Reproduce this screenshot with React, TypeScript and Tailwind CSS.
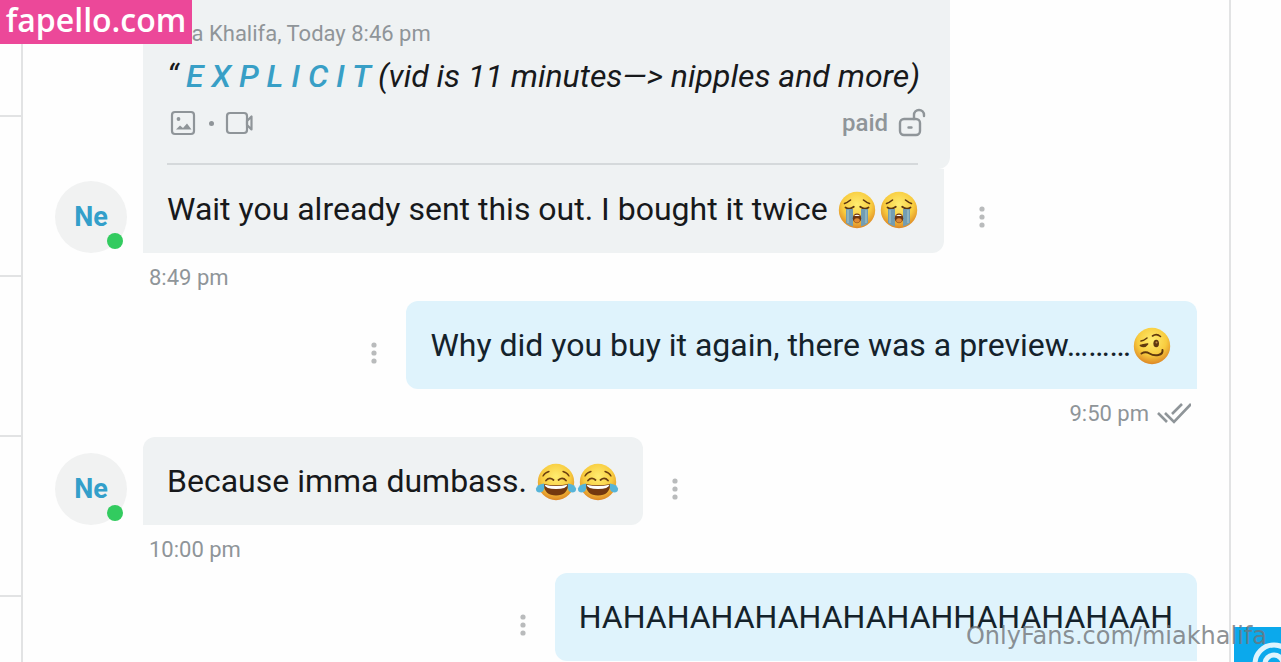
import { ReactNode } from 'react';
import clsx from 'clsx';

function Sob() {
  return (
    <svg viewBox="0 0 38 38" className="inline-block align-middle size-[38px] mx-[2px] -mt-2 -mb-1" role="img" aria-label="Loudly crying">
      <circle cx="19" cy="19" r="18.2" fill="url(#face)" />
      <g fill="none" stroke="#5b3410" strokeLinecap="round">
        <path d="M6.5 12.5Q9.500 11.500 12.500 9M31.500 12.500Q28.500 11.500 25.500 9" strokeWidth="1.6" />
        <path d="M7.500 16.500Q11.500 19 15.800 15.800M30.500 16.500Q26.500 19 22.200 15.800" strokeWidth="1.8" />
      </g>
      <path d="M8 18h7v17.500q-4-.9-7-3.600zM30 18h-7v17.500q4-.9 7-3.600z" fill="#739db2" />
      <path d="M10 19v13M28 19v13" stroke="#96bac6" strokeWidth="1.5" />
      <ellipse cx="19" cy="27.3" rx="4.2" ry="4.9" fill="#6d3511" />
      <path d="M16 25q3-2.500 6 0z" fill="#fff" />
      <ellipse cx="19" cy="29.500" rx="2.8" ry="2.2" fill="#e08a35" />
    </svg>
  );
}

function Joy() {
  return (
    <svg viewBox="0 0 38 38" className="inline-block align-middle size-[38px] mx-[2px] -mt-2 -mb-1 overflow-visible" role="img" aria-label="Tears of joy">
      <circle cx="19" cy="19" r="18.2" fill="url(#face)" />
      <g fill="none" stroke="#6b3e10" strokeLinecap="round">
        <path d="M6 13Q8 9.500 12 8.500M32 13Q30 9.500 26 8.500" strokeWidth="1.3" />
        <path d="M9 17.500Q12.500 13.500 16.500 17M29 17.500Q25.500 13.500 21.500 17" strokeWidth="1.8" />
      </g>
      <path d="M6.500 21Q19 23.500 31.500 21Q30.500 32.500 19 32.500T6.500 21z" fill="#74380f" />
      <path d="M7.500 21.800Q19 24.200 30.500 21.800Q29.500 26 19 26T7.500 21.800z" fill="#fff" />
      <path d="M7 20.500Q8.500 29 3 29.500Q-1.500 29.500-1 25.500Q0 21.500 7 20.500z" fill="#56b4d8" />
      <path d="M31 20.500Q29.500 29 35 29.500Q39.500 29.500 39 25.500Q38 21.500 31 20.500z" fill="#56b4d8" />
    </svg>
  );
}

function Woozy() {
  return (
    <svg viewBox="0 0 38 38" className="inline-block align-middle size-[38px] mx-[2px] -mt-2 -mb-1" role="img" aria-label="Woozy face">
      <circle cx="19" cy="19" r="18.2" fill="url(#face)" />
      <g fill="none" stroke="#60390f" strokeLinecap="round" strokeLinejoin="round">
        <path d="M8 14Q11 13.500 14 11M19.500 9Q23.500 6 27.500 9.500" strokeWidth="1.6" />
        <path d="M7.500 18.500Q11.500 21 14.500 17L9 18" strokeWidth="1.7" />
        <path d="M8.500 26.500Q12.500 24 16.500 26.500T25.500 28Q30 27 29.500 23" strokeWidth="2" />
      </g>
      <ellipse cx="23.200" cy="16.500" rx="2.8" ry="3.8" fill="#60390f" />
      <circle cx="23.500" cy="15.500" r="1" fill="#c08a45" />
    </svg>
  );
}

function Avatar({ initials }: { initials: string }) {
  return (
    <div className="relative flex size-[72px] shrink-0 items-center justify-center rounded-full bg-[#f1f2f2] mr-4">
      <span className="text-[27px] font-bold text-[#339fca]">{initials}</span>
      <span className="absolute right-1 bottom-1 size-4 rounded-full bg-[#32cb5f]" />
    </div>
  );
}

function MenuButton() {
  return (
    <button aria-label="Message options" className="flex h-[72px] w-16 shrink-0 items-center justify-center">
      <svg width="6" height="22" viewBox="0 0 6 22" fill="#b9bbbc">
        <circle cx="3" cy="3" r="2.6" />
        <circle cx="3" cy="11" r="2.6" />
        <circle cx="3" cy="19" r="2.6" />
      </svg>
    </button>
  );
}

function Bubble({ children, own = false }: { children: ReactNode; own?: boolean }) {
  return (
    <div className={clsx(
      'p-6 text-[32px] leading-10 whitespace-nowrap',
      own ? 'bg-[#dff3fc] text-[#14222b] rounded-xl rounded-br-none' : 'bg-[#eff2f3] text-[#17191b] rounded-xl rounded-bl-none',
    )}>
      {children}
    </div>
  );
}

function Time({ children, own = false }: { children: ReactNode; own?: boolean }) {
  return (
    <div className={clsx(
      'flex h-12 items-center gap-2 text-[22px] text-[#8f9599]',
      own ? 'justify-end pr-[6px]' : 'pl-[94px]',
    )}>
      {children}
    </div>
  );
}

function QuotedPost() {
  return (
    <div className="w-fit bg-[#eff2f3] rounded-br-xl px-6 pt-[18px] pb-1 whitespace-nowrap">
      <div className="text-[22px] leading-8 text-[#8f9599]">Mia Khalifa, Today 8:46 pm</div>
      <div className="mt-[6px] pr-[6px] text-[32px] leading-10 italic text-[#17191b]">
        “<a href="#explicit" className="font-medium text-[#389fc6]"> E X P L I C I T </a>(vid is 11 minutes—&gt; nipples and more)
      </div>
      <div className="mt-[11px] flex h-8 items-center text-[#8f9599]">
        <svg width="32" height="32" viewBox="0 0 32 32" fill="none" stroke="currentColor" strokeWidth="2.2">
          <rect x="5" y="5" width="22" height="22" rx="3" />
          <circle cx="11.500" cy="12" r="1.900" fill="currentColor" stroke="none" />
          <path d="M9 22.500l4-4 3 2.500 4-4.500 4.500 6z" fill="currentColor" stroke="none" />
        </svg>
        <span className="mx-[10px] size-[5px] rounded-full bg-current" />
        <svg width="32" height="32" viewBox="0 0 32 32" fill="none" stroke="currentColor" strokeWidth="2.2" strokeLinejoin="round">
          <rect x="3" y="6" width="20" height="20" rx="3" />
          <path d="M23 14l4.500-4.500v13l-4.500-4.500z" />
        </svg>
        <span className="ml-auto mr-2 text-2xl font-medium">paid</span>
        <svg width="30" height="32" viewBox="0 0 30 32" fill="none" stroke="currentColor" strokeWidth="2.4" strokeLinecap="round">
          <rect x="4" y="12" width="20" height="16" rx="4" />
          <path d="M18 12V8a5 5 0 0 1 10 0v1M12.500 20.500h3" />
        </svg>
      </div>
      <div className="mt-6 mr-2 border-t-2 border-[#d5d9db]" />
    </div>
  );
}

function ReadTicks() {
  return (
    <svg width="34" height="22" viewBox="0 0 34 22" fill="none" stroke="#8f9599" strokeWidth="2.6" role="img" aria-label="Read">
      <path d="M1 11l9 9M8 11l9 9L34 2M15 12L25 2" />
    </svg>
  );
}

export default function App() {
  return (
    <div className="relative flex h-screen overflow-hidden bg-[#fefefe] font-[Roboto,sans-serif]">
      <svg width="0" height="0" className="absolute" aria-hidden="true">
        <defs>
          <radialGradient id="face" cx=".5" cy=".35" r=".66">
            <stop offset="0" stopColor="#ffed70" />
            <stop offset=".6" stopColor="#f8cc3f" />
            <stop offset="1" stopColor="#dc8424" />
          </radialGradient>
        </defs>
      </svg>

      {/* Conversation list edge */}
      <aside className="w-[23px] shrink-0 border-r-2 border-[#e2e3e4]">
        <div className="h-[117px] border-b-2 border-[#e2e3e4]" />
        <div className="h-40 border-b-2 border-[#e2e3e4]" />
        <div className="h-40 border-b-2 border-[#e2e3e4]" />
        <div className="h-40 border-b-2 border-[#e2e3e4]" />
      </aside>

      <main className="min-w-0 flex-1 px-8">
        <div className="flex items-end">
          <Avatar initials="Ne" />
          <div>
            <QuotedPost />
            <div className="w-fit rounded-br-xl bg-[#eff2f3] px-6 pt-5 pb-6 text-[32px] leading-10 whitespace-nowrap text-[#17191b]">
              Wait you already sent this out. I bought it twice <Sob /><Sob />
            </div>
          </div>
          <MenuButton />
        </div>
        <Time>8:49 pm</Time>

        <div className="flex items-end justify-end">
          <MenuButton />
          <Bubble own>Why did you buy it again, there was a preview………<Woozy /></Bubble>
        </div>
        <Time own>9:50 pm <ReadTicks /></Time>

        <div className="flex items-end">
          <Avatar initials="Ne" />
          <Bubble>Because imma dumbass. <Joy /><Joy /></Bubble>
          <MenuButton />
        </div>
        <Time>10:00 pm</Time>

        <div className="flex items-end justify-end">
          <MenuButton />
          <Bubble own>HAHAHAHAHAHAHAHAHHAHAHAHAAH</Bubble>
        </div>
      </main>

      <aside className="flex w-[52px] shrink-0 flex-col justify-end border-l-2 border-[#e2e3e4] pl-[3px]">
        <svg viewBox="0 0 47 35" className="w-full bg-[#0ba9ec]" fill="none" role="img" aria-label="OnlyFans">
          <circle cx="40" cy="37" r="19" stroke="#dff4fd" strokeWidth="5" />
          <circle cx="40" cy="37" r="9" stroke="#dff4fd" strokeWidth="5" />
        </svg>
      </aside>

      <div className="absolute top-0 left-0 h-11 w-48 bg-[#ec4899] text-center font-['Open_Sans',sans-serif] text-[32px] leading-10 font-semibold text-white">
        fapello.com
      </div>
      <div className="absolute right-[14px] bottom-[10px] font-['DejaVu_Sans',sans-serif] text-2xl text-[#707478]/80">
        OnlyFans.com/miakhalifa
      </div>
    </div>
  );
}
